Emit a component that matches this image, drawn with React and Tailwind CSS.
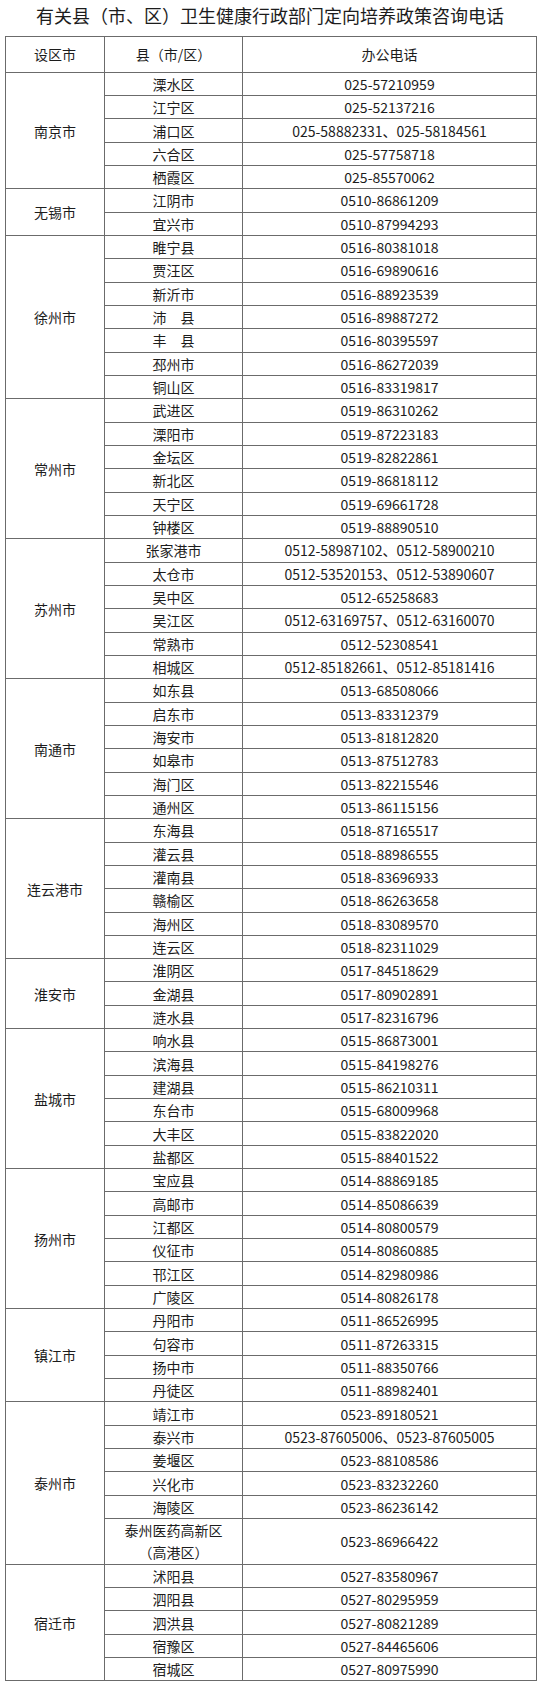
import React from "react";

const DATA = [
  {
    city: "南京市",
    rows: [
      ["溧水区", "025-57210959"],
      ["江宁区", "025-52137216"],
      ["浦口区", "025-58882331、025-58184561"],
      ["六合区", "025-57758718"],
      ["栖霞区", "025-85570062"],
    ],
  },
  {
    city: "无锡市",
    rows: [
      ["江阴市", "0510-86861209"],
      ["宜兴市", "0510-87994293"],
    ],
  },
  {
    city: "徐州市",
    rows: [
      ["睢宁县", "0516-80381018"],
      ["贾汪区", "0516-69890616"],
      ["新沂市", "0516-88923539"],
      ["沛　县", "0516-89887272"],
      ["丰　县", "0516-80395597"],
      ["邳州市", "0516-86272039"],
      ["铜山区", "0516-83319817"],
    ],
  },
  {
    city: "常州市",
    rows: [
      ["武进区", "0519-86310262"],
      ["溧阳市", "0519-87223183"],
      ["金坛区", "0519-82822861"],
      ["新北区", "0519-86818112"],
      ["天宁区", "0519-69661728"],
      ["钟楼区", "0519-88890510"],
    ],
  },
  {
    city: "苏州市",
    rows: [
      ["张家港市", "0512-58987102、0512-58900210"],
      ["太仓市", "0512-53520153、0512-53890607"],
      ["吴中区", "0512-65258683"],
      ["吴江区", "0512-63169757、0512-63160070"],
      ["常熟市", "0512-52308541"],
      ["相城区", "0512-85182661、0512-85181416"],
    ],
  },
  {
    city: "南通市",
    rows: [
      ["如东县", "0513-68508066"],
      ["启东市", "0513-83312379"],
      ["海安市", "0513-81812820"],
      ["如皋市", "0513-87512783"],
      ["海门区", "0513-82215546"],
      ["通州区", "0513-86115156"],
    ],
  },
  {
    city: "连云港市",
    rows: [
      ["东海县", "0518-87165517"],
      ["灌云县", "0518-88986555"],
      ["灌南县", "0518-83696933"],
      ["赣榆区", "0518-86263658"],
      ["海州区", "0518-83089570"],
      ["连云区", "0518-82311029"],
    ],
  },
  {
    city: "淮安市",
    rows: [
      ["淮阴区", "0517-84518629"],
      ["金湖县", "0517-80902891"],
      ["涟水县", "0517-82316796"],
    ],
  },
  {
    city: "盐城市",
    rows: [
      ["响水县", "0515-86873001"],
      ["滨海县", "0515-84198276"],
      ["建湖县", "0515-86210311"],
      ["东台市", "0515-68009968"],
      ["大丰区", "0515-83822020"],
      ["盐都区", "0515-88401522"],
    ],
  },
  {
    city: "扬州市",
    rows: [
      ["宝应县", "0514-88869185"],
      ["高邮市", "0514-85086639"],
      ["江都区", "0514-80800579"],
      ["仪征市", "0514-80860885"],
      ["邗江区", "0514-82980986"],
      ["广陵区", "0514-80826178"],
    ],
  },
  {
    city: "镇江市",
    rows: [
      ["丹阳市", "0511-86526995"],
      ["句容市", "0511-87263315"],
      ["扬中市", "0511-88350766"],
      ["丹徒区", "0511-88982401"],
    ],
  },
  {
    city: "泰州市",
    rows: [
      ["靖江市", "0523-89180521"],
      ["泰兴市", "0523-87605006、0523-87605005"],
      ["姜堰区", "0523-88108586"],
      ["兴化市", "0523-83232260"],
      ["海陵区", "0523-86236142"],
      ["泰州医药高新区\n（高港区）", "0523-86966422"],
    ],
  },
  {
    city: "宿迁市",
    rows: [
      ["沭阳县", "0527-83580967"],
      ["泗阳县", "0527-80295959"],
      ["泗洪县", "0527-80821289"],
      ["宿豫区", "0527-84465606"],
      ["宿城区", "0527-80975990"],
    ],
  },
];

const cell = "border border-[#6b6b6b] text-center align-middle p-0";

export default function App() {
  return (
    <div className="w-[540px] bg-white text-[#1c1c1c] font-['Noto_Sans_CJK_SC','Noto_Sans',sans-serif]">
      <h1 className="h-[30px] mb-[6px] text-center text-[18px] leading-[30px] font-normal">
        有关县（市、区）卫生健康行政部门定向培养政策咨询电话
      </h1>

      <table className="ml-[5px] w-[531px] border-collapse table-fixed text-[14px] leading-[20px]">
        <colgroup>
          <col className="w-[99px]" />
          <col className="w-[138px]" />
          <col className="w-[294px]" />
        </colgroup>
        <thead>
          <tr className="h-[35.7px]">
            <th className={`${cell} font-normal`}>设区市</th>
            <th className={`${cell} font-normal`}>县（市/区）</th>
            <th className={`${cell} font-normal`}>办公电话</th>
          </tr>
        </thead>
        <tbody>
          {DATA.map((group) =>
            group.rows.map(([county, phone], idx) => {
              const tall = county.includes("\n");
              return (
                <tr
                  key={group.city + county}
                  className={tall ? "h-[45.8px]" : "h-[23.33px]"}
                >
                  {idx === 0 && (
                    <td
                      rowSpan={group.rows.length}
                      className={cell}
                    >
                      {group.city}
                    </td>
                  )}
                  <td className={`${cell} ${tall ? "leading-[22px] whitespace-pre-line" : ""}`}>
                    {county}
                  </td>
                  <td className={cell}>{phone}</td>
                </tr>
              );
            })
          )}
        </tbody>
      </table>
    </div>
  );
}
